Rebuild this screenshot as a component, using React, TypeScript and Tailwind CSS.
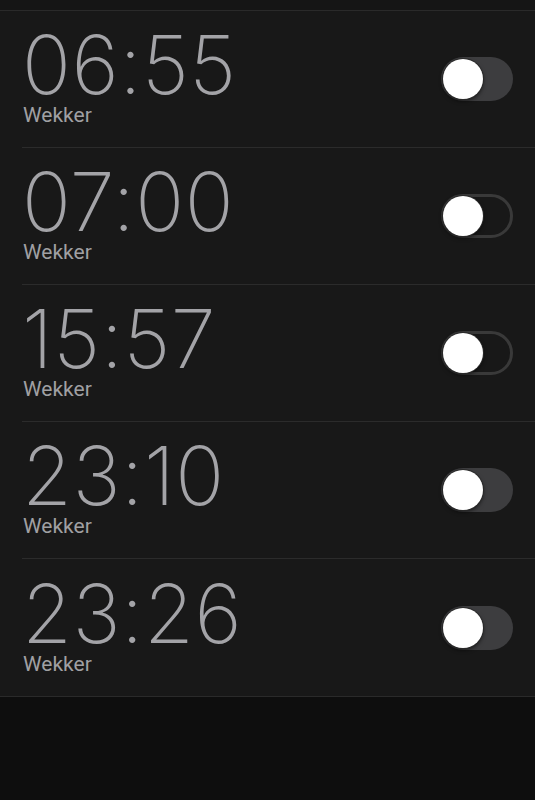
import React from "react";

type Alarm = { time: string; label: string; filled: boolean };

const alarms: Alarm[] = [
  { time: "06:55", label: "Wekker", filled: true },
  { time: "07:00", label: "Wekker", filled: false },
  { time: "15:57", label: "Wekker", filled: false },
  { time: "23:10", label: "Wekker", filled: true },
  { time: "23:26", label: "Wekker", filled: true },
];

function Toggle({ filled }: { filled: boolean }) {
  return (
    <div
      className={
        filled
          ? "relative h-[44px] w-[72px] rounded-full bg-[#3d3d3f]"
          : "relative h-[44px] w-[72px] rounded-full border-[3px] border-[#393939] bg-[#181818]"
      }
    >
      <div
        className={
          filled
            ? "absolute left-[2px] top-[2px] h-[40px] w-[40px] rounded-full bg-white shadow-[0_2px_4px_rgba(0,0,0,0.6)] ring-1 ring-[#2a2a2a]"
            : "absolute left-[-1px] top-[-1px] h-[40px] w-[40px] rounded-full bg-white shadow-[0_2px_4px_rgba(0,0,0,0.6)] ring-1 ring-[#2a2a2a]"
        }
      />
    </div>
  );
}

export default function App() {
  return (
    <div className="flex min-h-[800px] w-full flex-col bg-[#0e0e0e]">
      <div className="h-[11px] border-b border-[#2a2a2a] bg-[#151515]" />
      <div className="bg-[#181818]">
        {alarms.map((a, i) => (
          <div key={i} className="pl-[22px]">
            <div
              className={
                i === alarms.length - 1
                  ? "flex h-[137px] items-center justify-between pr-[22px]"
                  : "flex h-[137px] items-center justify-between border-b border-[#2b2b2b] pr-[22px]"
              }
            >
              <div className="flex flex-col pt-[2px]">
                <div
                  className="text-[81px] font-extralight leading-[62px] tracking-[0.5px] text-[#a3a3a7]"
                  style={{ fontFamily: "Inter, Roboto, sans-serif" }}
                >
                  {a.time}
                </div>
                <div
                  className="ml-[1px] mt-[9px] text-[21px] leading-none text-[#a0a0a3]"
                  style={{ fontFamily: "Roboto, 'Liberation Sans', sans-serif" }}
                >
                  {a.label}
                </div>
              </div>
              <Toggle filled={a.filled} />
            </div>
          </div>
        ))}
      </div>
      <div className="h-px bg-[#2a2a2a]" />
    </div>
  );
}
